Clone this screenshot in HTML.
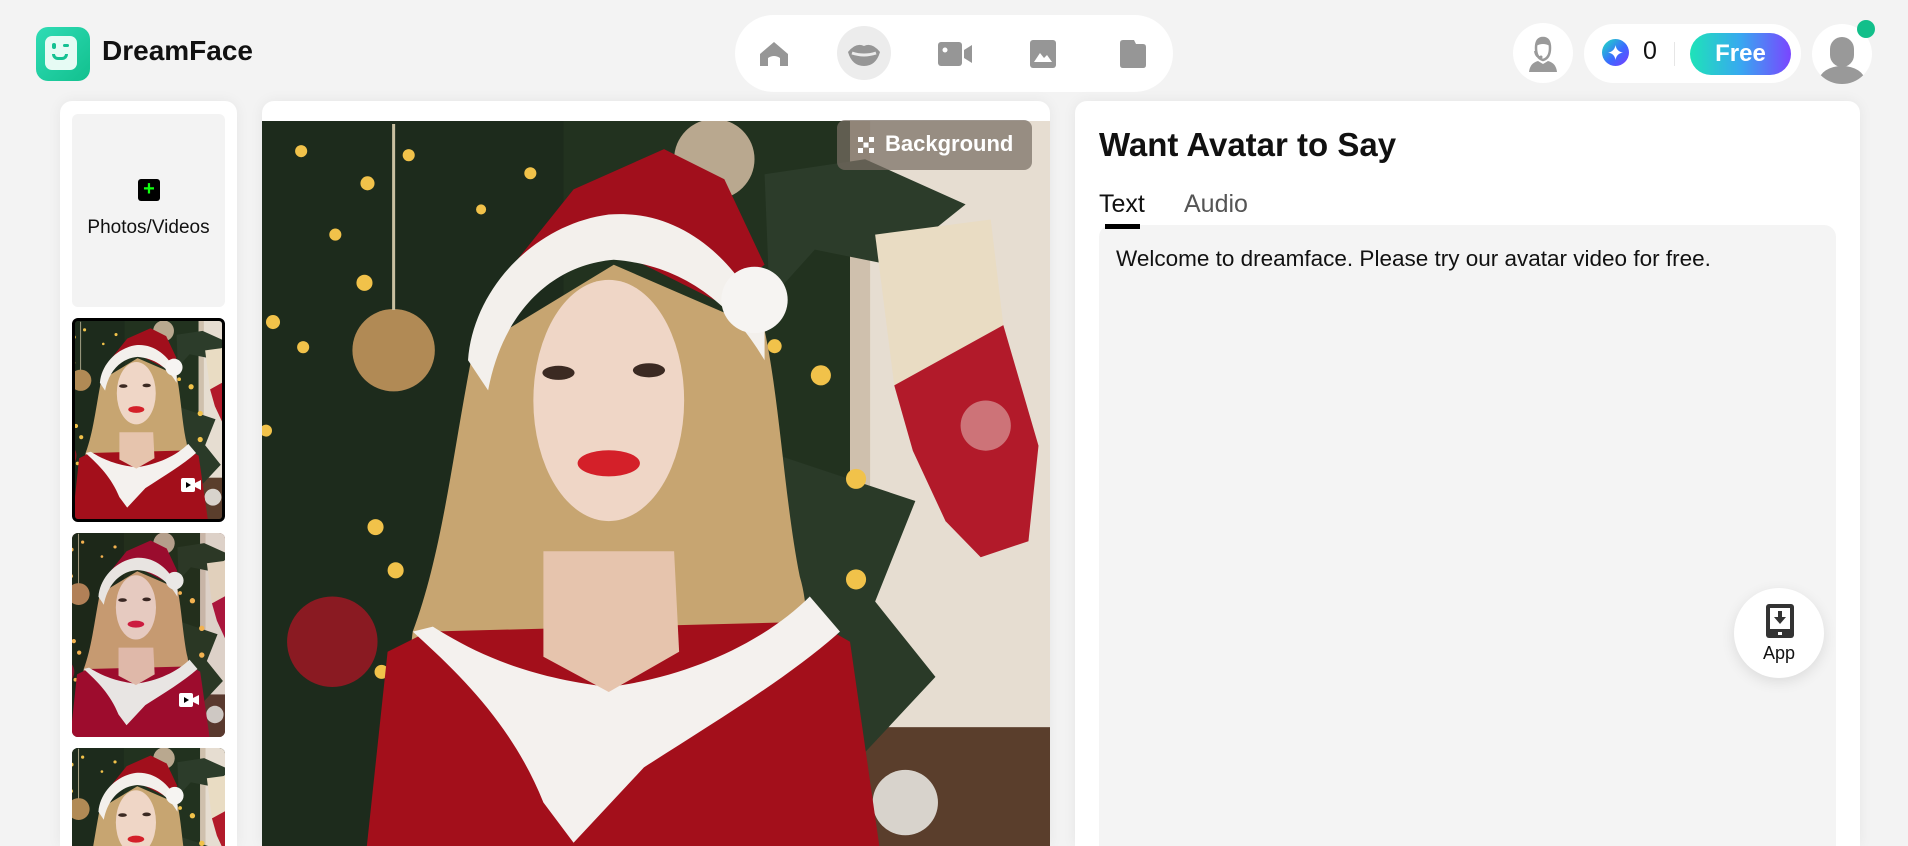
<!DOCTYPE html>
<html><head><meta charset="utf-8">
<style>
*{box-sizing:border-box;margin:0;padding:0}
html,body{width:1908px;height:846px;overflow:hidden}
body{background:#f3f3f3;font-family:"Liberation Sans",sans-serif;position:relative;color:#111}
.abs{position:absolute}
.card{position:absolute;background:#fff;border-radius:12px 12px 0 0;box-shadow:0 0 14px rgba(0,0,0,.06)}
.circ{position:absolute;background:#fff;border-radius:50%}
</style></head><body>
<svg width="0" height="0" style="position:absolute">
<defs>
<symbol id="scene" viewBox="0 44 1568 1524" preserveAspectRatio="xMidYMid slice">
<rect x="0" y="0" width="1568" height="1600" fill="#22321f"/>
<rect x="0" y="0" width="600" height="1600" fill="#1d2b1c"/>
<rect x="1170" y="44" width="400" height="1220" fill="#e6ddd1"/>
<rect x="1170" y="44" width="40" height="1220" fill="#cfc0ad"/>
<rect x="1200" y="1250" width="370" height="320" fill="#5a3e2c"/>
<path d="M1000 150 L1200 120 L1400 210 L1250 330 L1100 300 L1010 400Z" fill="#2c3c2a"/>
<path d="M1000 700 L1300 800 L1220 1000 L1340 1150 L1200 1300 L1040 1000Z" fill="#2a3a28"/>
<circle cx="900" cy="120" r="80" fill="#b9a88f"/>
<circle cx="262" cy="500" r="82" fill="#b18a55"/>
<circle cx="140" cy="1080" r="90" fill="#8a1a22"/>
<circle cx="1280" cy="1400" r="65" fill="#d8d3cc"/>
<line x1="262" y1="50" x2="262" y2="420" stroke="#c9c0a0" stroke-width="6"/>
<g fill="#f1c24a">
<circle cx="78" cy="104" r="12"/><circle cx="210" cy="168" r="14"/><circle cx="292" cy="112" r="12"/><circle cx="534" cy="148" r="12"/><circle cx="204" cy="366" r="16"/><circle cx="22" cy="444" r="14"/><circle cx="82" cy="494" r="12"/><circle cx="8" cy="660" r="12"/><circle cx="226" cy="852" r="16"/><circle cx="266" cy="938" r="16"/><circle cx="238" cy="1140" r="14"/><circle cx="1112" cy="550" r="20"/><circle cx="1020" cy="492" r="14"/><circle cx="1182" cy="756" r="20"/><circle cx="1182" cy="956" r="20"/><circle cx="436" cy="220" r="10"/><circle cx="146" cy="270" r="12"/>
</g>
<path d="M1220 270 L1450 240 L1475 450 L1258 570Z" fill="#e9dcc3"/>
<path d="M1258 570 L1475 450 L1545 690 L1525 880 L1430 912 L1360 840 L1295 700Z" fill="#b21a2a"/>
<circle cx="1440" cy="650" r="50" fill="#d99a9a" opacity=".7"/>
<path d="M420 500 C380 700 360 900 300 1060 C280 1200 330 1300 420 1340 L1000 1330 C1080 1200 1100 1050 1070 950 C1040 800 1030 600 1000 460 L700 330Z" fill="#c7a571"/>
<path d="M330 1060 L250 1100 L200 1568 L1240 1568 L1170 1080 L1100 1040Z" fill="#a30f1b"/>
<path d="M300 1060 C400 1150 500 1250 560 1400 L620 1480 L760 1330 C900 1240 1050 1150 1150 1060 L1090 990 C1000 1080 850 1150 690 1170 C520 1150 420 1100 340 1050Z" fill="#f4f1ee"/>
<path d="M560 900 L820 900 L830 1100 L690 1180 L560 1110Z" fill="#e6c4ad"/>
<ellipse cx="690" cy="600" rx="150" ry="240" fill="#efd6c6"/>
<ellipse cx="590" cy="545" rx="32" ry="14" fill="#3b2a22"/>
<ellipse cx="770" cy="540" rx="32" ry="14" fill="#3b2a22"/>
<ellipse cx="690" cy="725" rx="62" ry="26" fill="#d42029"/>
<path d="M460 380 L620 180 L800 100 L920 160 L1000 330 L900 400 L700 300Z" fill="#a10f1c"/>
<path d="M410 520 C420 380 540 250 690 230 C820 220 930 300 1000 440 L1000 520 C930 400 830 330 700 320 C580 330 480 420 450 580Z" fill="#f3f0ec"/>
<circle cx="980" cy="400" r="66" fill="#f6f4f2"/>
</symbol>
</defs>
</svg>

<!-- Header -->
<div class="abs" style="left:36px;top:27px;width:54px;height:54px;border-radius:12px;background:linear-gradient(135deg,#2fdcb5,#12c08e)">
 <div class="abs" style="left:9px;top:9px;width:32px;height:34px;border-radius:7px;background:#e6fbf4"></div>
 <div class="abs" style="left:16px;top:16px;width:4px;height:6px;background:#14c192;border-radius:2px"></div>
 <div class="abs" style="left:27px;top:17px;width:6px;height:3px;background:#14c192;border-radius:2px"></div>
 <div class="abs" style="left:16px;top:27px;width:16px;height:6px;border:3px solid #14c192;border-top:none;border-radius:0 0 8px 8px"></div>
</div>
<div class="abs" style="left:102px;top:35px;font-size:28px;font-weight:bold;color:#111">DreamFace</div>

<div class="abs" style="left:735px;top:15px;width:438px;height:77px;background:#fff;border-radius:39px"></div>
<div class="circ" style="left:837px;top:26px;width:54px;height:54px;background:#ececec"></div>
<svg class="abs" style="left:758px;top:40px" width="32" height="28" viewBox="0 0 32 28"><path d="M16 2 L30 14 L30 26 L22 26 L22 18 Q16 14 10 18 L10 26 L2 26 L2 14Z" fill="#969696"/></svg>
<svg class="abs" style="left:846px;top:42px" width="36" height="24" viewBox="0 0 36 24"><path d="M2 10 Q10 0 18 4 Q26 0 34 10 Q30 24 18 24 Q6 24 2 10Z" fill="#969696"/><path d="M6 11 Q18 15 30 11" stroke="#ececec" stroke-width="3" fill="none"/></svg>
<svg class="abs" style="left:938px;top:42px" width="34" height="24" viewBox="0 0 34 24"><rect x="0" y="0" width="24" height="24" rx="3" fill="#969696"/><circle cx="7" cy="8" r="2.5" fill="#fff"/><path d="M26 8 L34 3 L34 21 L26 16Z" fill="#969696"/></svg>
<svg class="abs" style="left:1030px;top:40px" width="26" height="28" viewBox="0 0 26 28"><rect x="0" y="0" width="26" height="28" rx="3" fill="#969696"/><path d="M4 22 L10 13 L14 18 L17 15 L22 22Z" fill="#fff"/></svg>
<svg class="abs" style="left:1120px;top:40px" width="26" height="28" viewBox="0 0 26 28"><path d="M3 0 L14 0 L16 4 L23 4 Q26 4 26 7 L26 25 Q26 28 23 28 L3 28 Q0 28 0 25 L0 3 Q0 0 3 0Z" fill="#969696"/></svg>

<div class="circ" style="left:1513px;top:23px;width:60px;height:60px"></div>
<svg class="abs" style="left:1528px;top:36px" width="30" height="36" viewBox="0 0 30 36"><path d="M8 12 Q8 2 15 2 Q22 2 22 12 Q22 22 15 24 Q8 22 8 12Z" fill="none" stroke="#9a9a9a" stroke-width="2.5"/><path d="M8 10 Q10 2 15 2 Q20 2 22 10 Q15 6 8 10Z" fill="#9a9a9a"/><path d="M1 36 Q2 27 10 25 L15 28 L20 25 Q28 27 29 36Z" fill="#9a9a9a"/><path d="M7 15 Q8 22 13 21" stroke="#9a9a9a" stroke-width="2" fill="none"/><circle cx="13" cy="21" r="1.5" fill="#9a9a9a"/></svg>

<div class="abs" style="left:1584px;top:24px;width:217px;height:59px;background:#fff;border-radius:30px"></div>
<div class="circ" style="left:1602px;top:39px;width:27px;height:27px;background:linear-gradient(135deg,#1ee3c0,#3a6bff 55%,#7a3cff)"></div>
<svg class="abs" style="left:1607px;top:44px" width="17" height="17" viewBox="0 0 16 16"><path d="M8 1 Q9 7 15 8 Q9 9 8 15 Q7 9 1 8 Q7 7 8 1Z" fill="#fff"/></svg>
<div class="abs" style="left:1643px;top:37px;font-size:25px;color:#111">0</div>
<div class="abs" style="left:1674px;top:42px;width:1px;height:24px;background:#e6e6e6"></div>
<div class="abs" style="left:1690px;top:33px;width:101px;height:42px;border-radius:21px;background:linear-gradient(90deg,#1ee3b8,#38a8f0 50%,#7a45ff);color:#fff;font-weight:bold;font-size:24px;text-align:center;line-height:42px">Free</div>

<div class="circ" style="left:1812px;top:24px;width:60px;height:60px;overflow:hidden">
 <div class="abs" style="left:18px;top:13px;width:24px;height:30px;border-radius:12px;background:#999"></div>
 <div class="abs" style="left:7px;top:42px;width:46px;height:30px;border-radius:50% 50% 0 0;background:#999"></div>
</div>
<div class="circ" style="left:1857px;top:20px;width:18px;height:18px;background:#12bf8a"></div>

<!-- Left panel -->
<div class="card" style="left:60px;top:101px;width:177px;height:745px"></div>
<div class="abs" style="left:72px;top:114px;width:153px;height:193px;background:#f3f3f3;border-radius:6px"></div>
<div class="abs" style="left:138px;top:179px;width:22px;height:22px;background:#000;border-radius:3px;color:#1f1;font-weight:bold;font-size:20px;line-height:21px;text-align:center">+</div>
<div class="abs" style="left:72px;top:217px;width:153px;text-align:center;font-size:19px;color:#111">Photos/Videos</div>
<div class="abs" style="left:72px;top:318px;width:153px;height:204px;border:3px solid #000;border-radius:6px;overflow:hidden;background:#22321f">
 <svg width="147" height="198" style="display:block"><use href="#scene" width="147" height="198"/></svg>
 <svg class="abs" style="left:106px;top:157px" width="20" height="14" viewBox="0 0 20 14"><rect width="14" height="14" rx="2" fill="#fff"/><path d="M5 4 L10 7 L5 10Z" fill="#000"/><path d="M14 5 L20 2 L20 12 L14 9Z" fill="#fff"/></svg>
</div>
<div class="abs" style="left:72px;top:533px;width:153px;height:204px;border-radius:6px;overflow:hidden;background:#5a1a16">
 <svg width="153" height="204" style="display:block;filter:hue-rotate(-10deg) brightness(.95)"><use href="#scene" width="153" height="204"/></svg>
 <svg class="abs" style="left:107px;top:160px" width="20" height="14" viewBox="0 0 20 14"><rect width="14" height="14" rx="2" fill="#fff"/><path d="M5 4 L10 7 L5 10Z" fill="#000"/><path d="M14 5 L20 2 L20 12 L14 9Z" fill="#fff"/></svg>
</div>
<div class="abs" style="left:72px;top:748px;width:153px;height:98px;border-radius:6px 6px 0 0;overflow:hidden;background:#4a2a18">
 <svg width="153" height="204" style="display:block"><use href="#scene" width="153" height="204"/></svg>
</div>

<!-- Center preview -->
<div class="card" style="left:262px;top:101px;width:788px;height:745px"></div>
<div class="abs" style="left:262px;top:121px;width:788px;height:725px;overflow:hidden">
 <svg width="788" height="766" style="display:block"><use href="#scene" width="788" height="766"/></svg>
</div>
<div class="abs" style="left:837px;top:120px;width:195px;height:50px;border-radius:8px;background:rgba(120,110,100,.72)"></div>
<svg class="abs" style="left:858px;top:137px" width="16" height="16" viewBox="0 0 16 16"><g fill="#fff"><rect x="0" y="0" width="5" height="5"/><rect x="11" y="0" width="5" height="5"/><rect x="5.5" y="5.5" width="5" height="5"/><rect x="0" y="11" width="5" height="5"/><rect x="11" y="11" width="5" height="5"/></g></svg>
<div class="abs" style="left:885px;top:131px;font-size:22px;font-weight:bold;color:#fff">Background</div>

<!-- Right panel -->
<div class="card" style="left:1075px;top:101px;width:785px;height:745px"></div>
<div class="abs" style="left:1099px;top:126px;font-size:33px;font-weight:bold;color:#111">Want Avatar to Say</div>
<div class="abs" style="left:1099px;top:190px;font-size:25px;color:#111">Text</div>
<div class="abs" style="left:1184px;top:190px;font-size:25px;color:#555">Audio</div>
<div class="abs" style="left:1099px;top:225px;width:737px;height:640px;background:#f4f4f4;border-radius:12px"></div>
<div class="abs" style="left:1105px;top:224px;width:35px;height:5px;background:#000"></div>
<div class="abs" style="left:1116px;top:246px;font-size:22.5px;color:#111">Welcome to dreamface. Please try our avatar video for free.</div>

<div class="circ" style="left:1734px;top:588px;width:90px;height:90px;box-shadow:0 4px 14px rgba(0,0,0,.1)"></div>
<svg class="abs" style="left:1766px;top:604px" width="28" height="34" viewBox="0 0 28 34"><rect x="0" y="0" width="28" height="34" rx="3" fill="#333"/><rect x="4" y="4" width="20" height="21" fill="#fff"/><path d="M12 7 L16 7 L16 13 L20 13 L14 20 L8 13 L12 13Z" fill="#333"/><rect x="12" y="28" width="4" height="3" fill="#fff"/></svg>
<div class="abs" style="left:1734px;top:643px;width:90px;text-align:center;font-size:18px;color:#111">App</div>
</body></html>
